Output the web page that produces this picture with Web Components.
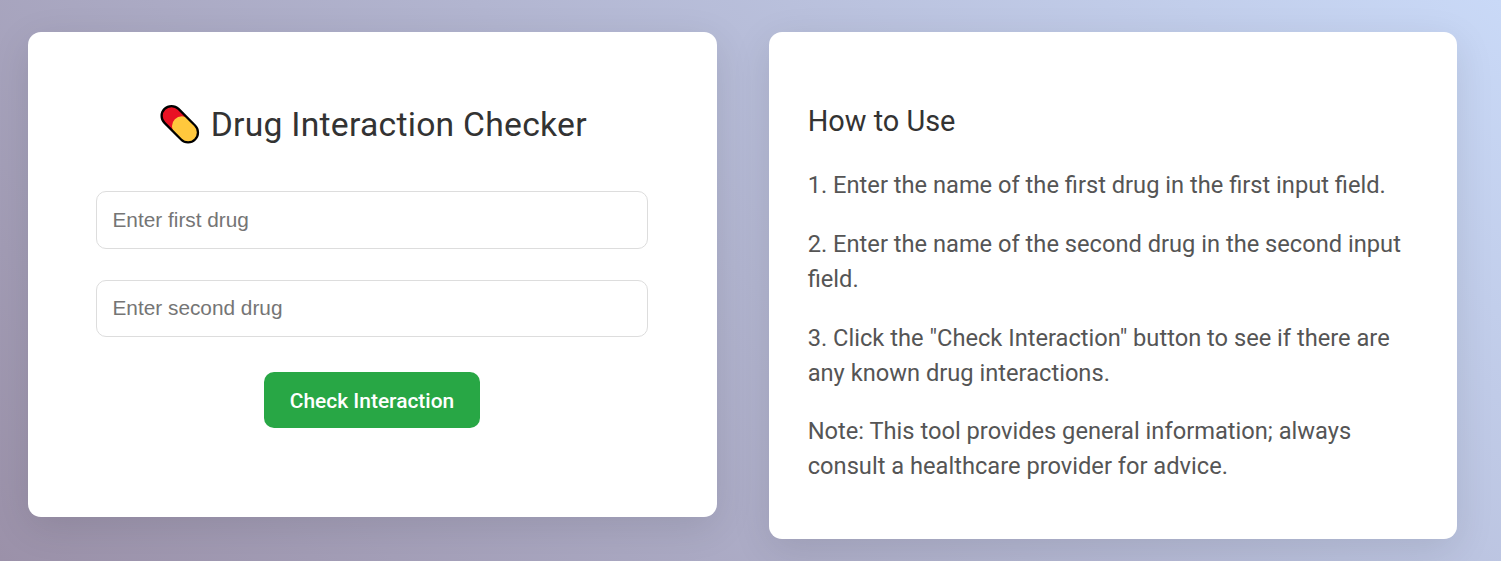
<!DOCTYPE html>
<html lang="en">
<head>
<meta charset="utf-8">
<title>Drug Interaction Checker</title>
<style>
html, body { margin: 0; height: 100%; overflow: hidden; }
body { background: linear-gradient(45deg, #9b91a9, #c9d9f7); font-family: Roboto, sans-serif; color: #333; }
</style>
</head>
<body>
<drug-app></drug-app>
<script>
const define = (name, html) => customElements.define(name, class extends HTMLElement {
  constructor() {
    super();
    this.attachShadow({ mode: 'open' }).innerHTML = html;
  }
});

define('pill-icon', `
<style>:host{display:block;width:40px;height:40px}svg{display:block}</style>
<svg width="40" height="40" viewBox="0 0 40 40">
  <g transform="translate(19.8 20.2) rotate(45)">
    <path d="M0-10H-12A10 10 0 0 0-12 10H0Z" fill="#e81224"/>
    <path d="M12-10H3A10 10 0 0 0 3 10H12A10 10 0 0 0 12-10Z" fill="#ffc83d"/>
    <rect x="-21.6" y="-9.9" width="43.2" height="19.8" rx="9.9" fill="none" stroke="#000" stroke-width="2.3"/>
  </g>
</svg>`);

define('panel-card', `
<style>
:host{display:block;box-sizing:border-box;background:#fff;border-radius:13px;box-shadow:0 10px 39px rgba(0,0,0,.1)}
</style><slot></slot>`);

define('drug-field', `
<style>
:host{display:block}
input{display:block;box-sizing:border-box;width:100%;height:100%;margin:0;padding:0 15.5px;border:1px solid #ddd;border-radius:10px;background:#fff;font:20.8px "Liberation Sans",Arial,sans-serif;outline:0}
:host(.second) input{padding-bottom:1px}
input::placeholder{color:#757575}
</style><input type="text">`);
customElements.define('drug-input', class extends customElements.get('drug-field') {
  connectedCallback() { this.shadowRoot.querySelector('input').placeholder = this.getAttribute('placeholder'); }
});

define('action-button', `
<style>
:host{display:block}
button{display:block;width:216px;height:56px;padding:2px 0 0;border:0;border-radius:10px;background:#28a745;color:#fff;font:500 20.95px Roboto,sans-serif}
</style><button><slot></slot></button>`);

define('checker-form', `
<style>
:host{display:flex;flex-direction:column;align-items:center;padding:72px 69px 0 68px}
header{display:flex;align-items:center;gap:10.5px;height:40px;margin-bottom:47px;padding-left:3px}
h1{margin:0;padding-top:1px;font-size:33.7px;font-weight:400;line-height:40px;letter-spacing:.25px;white-space:nowrap}
drug-input{width:552px}
.first{height:58px;margin-bottom:31px}
.second{height:57px;margin-bottom:35px}
</style>
<header><pill-icon></pill-icon><h1>Drug Interaction Checker</h1></header>
<drug-input class="first" placeholder="Enter first drug"></drug-input>
<drug-input class="second" placeholder="Enter second drug"></drug-input>
<action-button>Check Interaction</action-button>`);

define('usage-guide', `
<style>
:host{display:block;padding:69px 38.7px 0}
h2{margin:0 0 27.4px;font-size:28.9px;font-weight:400;line-height:40px}
p{margin:0 0 23.6px;color:#555;font-size:23.67px;line-height:35px}
p:nth-of-type(2){margin-bottom:24px}
p:nth-of-type(3){margin-bottom:23px}
</style>
<h2>How to Use</h2>
<p>1. Enter the name of the first drug in the first input field.</p>
<p>2. Enter the name of the second drug in the second input field.</p>
<p>3. Click the "Check Interaction" button to see if there are any known drug interactions.</p>
<p>Note: This tool provides general information; always consult a healthcare provider for advice.</p>`);

define('drug-app', `
<style>
:host{display:flex;align-items:flex-start;gap:52px;padding:32px 44px 0 28px}
.form{width:689px;height:485px}
.guide{width:688px;height:507px}
</style>
<panel-card class="form"><checker-form></checker-form></panel-card>
<panel-card class="guide"><usage-guide></usage-guide></panel-card>`);
</script>
</body>
</html>
